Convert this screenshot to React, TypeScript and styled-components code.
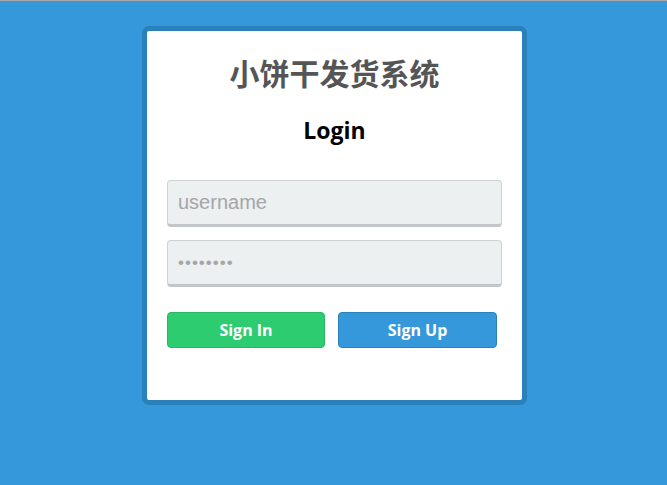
import React from "react";
import styled, { createGlobalStyle } from "styled-components";

const GlobalStyle = createGlobalStyle`
  html, body {
    margin: 0;
    padding: 0;
  }
  body {
    background: #3498db;
    border-top: 1px solid #a9a9a9;
    min-height: 484px;
    font-family: "Open Sans", "Noto Sans", "Noto Sans CJK SC", sans-serif;
  }
`;

const Page = styled.div`
  display: flex;
  justify-content: center;
  padding: 25px 0 0 2px;
`;

const Card = styled.div`
  width: 385px;
  box-sizing: border-box;
  background: #ffffff;
  border: 5px solid #2a80b9;
  border-radius: 7px;
  padding: 0 20px 52px;
  display: flex;
  flex-direction: column;
`;

const Title = styled.h1`
  margin: 21px 0 0;
  font-family: "Noto Sans CJK SC", "Noto Sans", sans-serif;
  font-size: 30px;
  line-height: 40px;
  font-weight: 700;
  color: #555555;
  text-align: center;
`;

const SubTitle = styled.h2`
  margin: 23px 0 0;
  font-family: "Open Sans", "Noto Sans", sans-serif;
  font-size: 23px;
  line-height: 30px;
  font-weight: 700;
  color: #000000;
  text-align: center;
`;

const Form = styled.form`
  display: flex;
  flex-direction: column;
  margin-top: 35px;
  gap: 13px;
`;

const Input = styled.input`
  box-sizing: border-box;
  width: 100%;
  height: 47px;
  margin: 0;
  padding: 0 10px;
  background: #ecf0f1;
  border: 1px solid #cfd2d3;
  border-bottom: 3px solid #c3c6c8;
  border-radius: 4px;
  font-family: "Liberation Sans", Arial, sans-serif;
  font-size: 20px;
  color: #555;
  outline: none;
  &::placeholder {
    color: #a4a6a7;
  }
  &[type="password"] {
    font-size: 17px;
    letter-spacing: 1px;
    color: #a4a6a7;
  }
`;

const Buttons = styled.div`
  display: flex;
  gap: 13px;
  margin-top: 25px;
`;

const Button = styled.button<{ $variant: "green" | "blue" }>`
  box-sizing: border-box;
  width: ${(p) => (p.$variant === "green" ? "158px" : "159px")};
  height: 36px;
  margin: 0;
  padding: 0;
  border-radius: 4px;
  border: 1px solid ${(p) => (p.$variant === "green" ? "#27b863" : "#2a80b9")};
  background: ${(p) => (p.$variant === "green" ? "#2ecc71" : "#3498db")};
  color: #ffffff;
  font-family: "Open Sans", "Noto Sans", sans-serif;
  font-size: 16px;
  font-weight: 700;
  cursor: pointer;
`;

export default function App() {
  return (
    <>
      <GlobalStyle />
      <Page>
        <Card>
          <Title>小饼干发货系统</Title>
          <SubTitle>Login</SubTitle>
          <Form onSubmit={(e) => e.preventDefault()}>
            <Input type="text" placeholder="username" />
            <Input type="password" defaultValue="password" />
          </Form>
          <Buttons>
            <Button $variant="green" type="button">Sign In</Button>
            <Button $variant="blue" type="button">Sign Up</Button>
          </Buttons>
        </Card>
      </Page>
    </>
  );
}
